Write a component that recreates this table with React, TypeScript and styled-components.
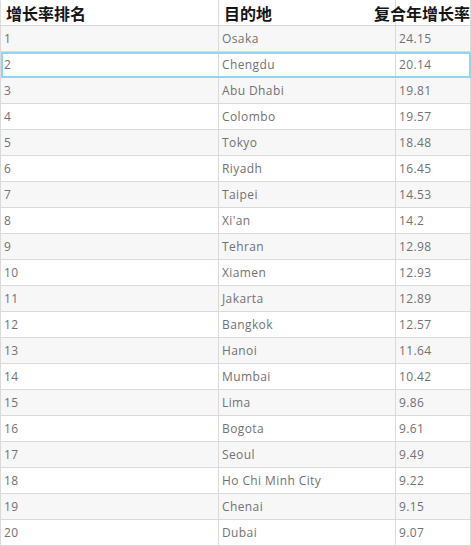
import styled, { createGlobalStyle } from 'styled-components';

const rows: [string, string][] = [
  ['Osaka', '24.15'],
  ['Chengdu', '20.14'],
  ['Abu Dhabi', '19.81'],
  ['Colombo', '19.57'],
  ['Tokyo', '18.48'],
  ['Riyadh', '16.45'],
  ['Taipei', '14.53'],
  ["Xi'an", '14.2'],
  ['Tehran', '12.98'],
  ['Xiamen', '12.93'],
  ['Jakarta', '12.89'],
  ['Bangkok', '12.57'],
  ['Hanoi', '11.64'],
  ['Mumbai', '10.42'],
  ['Lima', '9.86'],
  ['Bogota', '9.61'],
  ['Seoul', '9.49'],
  ['Ho Chi Minh City', '9.22'],
  ['Chenai', '9.15'],
  ['Dubai', '9.07'],
];

const App = () => {
  return (
    <>
      <GlobalStyle />
      <Table>
        <colgroup>
          <col style={{ width: 218 }} />
          <col style={{ width: 177 }} />
          <col style={{ width: 75 }} />
        </colgroup>
        <thead>
          <tr>
            <HeadCell>增长率排名</HeadCell>
            <HeadCell>目的地</HeadCell>
            <HeadCell $right>复合年增长率</HeadCell>
          </tr>
        </thead>
        <tbody>
          {rows.map(([city, rate], i) => (
            <Row key={city} $striped={i % 2 === 0} $active={i === 1}>
              <Cell>{i + 1}</Cell>
              <Cell>{city}</Cell>
              <Cell>{rate}</Cell>
            </Row>
          ))}
        </tbody>
      </Table>
    </>
  );
};

const GlobalStyle = createGlobalStyle`
  body {
    margin: 0;
    background: #fff;
    font-family: "Open Sans", "Noto Sans CJK SC", sans-serif;
  }
`;

const Table = styled.table`
  width: 470px;
  border-collapse: collapse;
  table-layout: fixed;
`;

const HeadCell = styled.th<{ $right?: boolean }>`
  height: 25px;
  padding: 0 0 0 5px;
  text-align: ${props => (props.$right ? 'right' : 'left')};
  font-family: "Noto Sans CJK SC", sans-serif;
  font-size: 16px;
  font-weight: 700;
  color: #151515;
  white-space: nowrap;
  overflow: visible;
  border-right: 1px solid #dcdcdc;
  border-bottom: 1px solid #d4d4d4;
  line-height: 22px;
  direction: ${props => (props.$right ? 'rtl' : 'ltr')};

  &:first-child {
    border-left: 1px solid #dcdcdc;
  }
`;

const Row = styled.tr<{ $striped: boolean; $active: boolean }>`
  height: 26px;
  background: ${props => (props.$striped ? '#f7f7f8' : '#fff')};
  outline: ${props => (props.$active ? '2px solid #8dd8f0' : 'none')};
  outline-offset: -2px;
`;

const Cell = styled.td`
  padding: 0 0 0 3px;
  border: 1px solid #dadada;
  font-family: "Open Sans", sans-serif;
  font-size: 12px;
  letter-spacing: 0.4px;
  color: #727272;
  white-space: nowrap;
`;

export default App;
